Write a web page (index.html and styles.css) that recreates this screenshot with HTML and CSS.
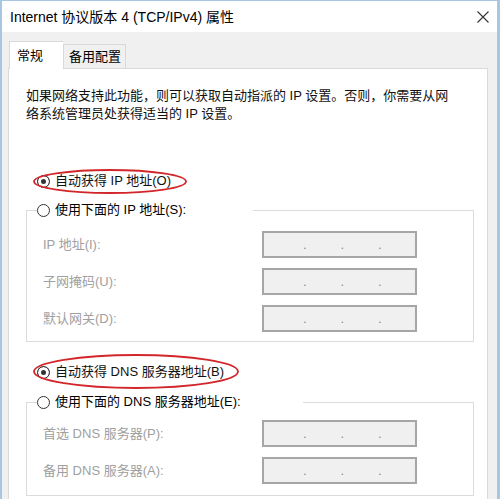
FILE: index.html
```html
<!DOCTYPE html>
<html lang="zh-CN">
<head>
    <meta charset="UTF-8">
    <meta name="viewport" content="width=device-width, initial-scale=1.0">
    <title>Internet 协议版本 4 (TCP/IPv4) 属性</title>
    <link rel="stylesheet" href="styles.css">
</head>
<body>
    <div class="window">
        <!-- Заголовок окна -->
        <div class="titlebar">
            <span class="title">Internet 协议版本 4 (TCP/IPv4) 属性</span>
            <svg class="close" width="12" height="12" viewBox="0 0 12 12">
                <path d="M0.5 0.5 L11.5 11.5 M11.5 0.5 L0.5 11.5" stroke="#333" stroke-width="1.1" fill="none"/>
            </svg>
        </div>

        <div class="content">
            <div class="tabs">
                <div class="tab active">常规</div>
                <div class="tab">备用配置</div>
            </div>

            <div class="panel">
                <p class="intro">如果网络支持此功能，则可以获取自动指派的 IP 设置。否则，你需要从网<br>络系统管理员处获得适当的 IP 设置。</p>

                <!-- IP -->
                <label class="radio-row first-row">
                    <input type="radio" name="ip" checked>
                    <span>自动获得 IP 地址(O)</span>
                    <svg class="mark mark-ip" viewBox="0 0 154 25" preserveAspectRatio="none">
                        <ellipse cx="77" cy="12.5" rx="76" ry="11.5" fill="none" stroke="#d2262b" stroke-width="1.8"/>
                    </svg>
                </label>

                <fieldset class="group group-ip">
                    <legend class="legend-ip">
                        <input type="radio" name="ip">
                        <span>使用下面的 IP 地址(S):</span>
                    </legend>
                    <div class="rows rows-ip">
                        <div class="row">
                            <span class="label">IP 地址(I):</span>
                            <div class="ip-field"><span>.</span><span>.</span><span>.</span></div>
                        </div>
                        <div class="row">
                            <span class="label">子网掩码(U):</span>
                            <div class="ip-field"><span>.</span><span>.</span><span>.</span></div>
                        </div>
                        <div class="row">
                            <span class="label">默认网关(D):</span>
                            <div class="ip-field"><span>.</span><span>.</span><span>.</span></div>
                        </div>
                    </div>
                </fieldset>

                <!-- DNS -->
                <label class="radio-row dns-row">
                    <input type="radio" name="dns" checked>
                    <span>自动获得 DNS 服务器地址(B)</span>
                    <svg class="mark mark-dns" viewBox="0 0 206 35" preserveAspectRatio="none">
                        <ellipse cx="103" cy="17.5" rx="102" ry="16.5" fill="none" stroke="#d2262b" stroke-width="1.8"/>
                    </svg>
                </label>

                <fieldset class="group group-dns">
                    <legend class="legend-dns">
                        <input type="radio" name="dns">
                        <span>使用下面的 DNS 服务器地址(E):</span>
                    </legend>
                    <div class="rows rows-dns">
                        <div class="row">
                            <span class="label">首选 DNS 服务器(P):</span>
                            <div class="ip-field"><span>.</span><span>.</span><span>.</span></div>
                        </div>
                        <div class="row">
                            <span class="label">备用 DNS 服务器(A):</span>
                            <div class="ip-field"><span>.</span><span>.</span><span>.</span></div>
                        </div>
                    </div>
                </fieldset>
            </div>
        </div>
    </div>
</body>
</html>
```

FILE: styles.css
```css
* {
    box-sizing: border-box;
    margin: 0;
    padding: 0;
}

html, body {
    width: 500px;
    height: 499px;
    overflow: hidden;
}

body {
    font-family: 'Liberation Sans', 'Noto Sans CJK SC', sans-serif;
    font-size: 13px;
    color: #111;
    background-color: #f0f0f0;
}

.window {
    width: 500px;
    height: 499px;
    border-top: 1px solid #a7c6e4;
    border-left: 2px solid #a7c6e4;
    border-right: 3px solid #a7c6e4;
    background-color: #f0f0f0;
    overflow: hidden;
}

.titlebar {
    height: 31px;
    background-color: #fff;
    display: flex;
    align-items: center;
    justify-content: space-between;
    padding: 0 8px 0 8px;
}

.title {
    font-size: 14px;
    line-height: 18px;
    color: #000;
}

.content {
    padding: 9px 9px 0 6px;
}

.tabs {
    display: flex;
    align-items: flex-end;
    height: 27px;
}

.tab {
    height: 24px;
    line-height: 23px;
    padding: 0 4px 0 5px;
    border: 1px solid #d9d9d9;
    border-bottom: none;
    background-color: #f0f0f0;
    color: #000;
}

.tab.active {
    height: 28px;
    line-height: 27px;
    margin-left: 1px;
    margin-bottom: -1px;
    width: 54px;
    padding-left: 7px;
    background-color: #fff;
    border-right: none;
    position: relative;
    z-index: 1;
}

.panel {
    background-color: #fff;
    border: 1px solid #d9d9d9;
    border-bottom: none;
    height: 431px;
    padding: 18px 13px 0 17px;
}

.intro {
    line-height: 18px;
    white-space: nowrap;
}

.radio-row {
    position: relative;
    display: flex;
    align-items: center;
    gap: 5px;
    height: 18px;
    line-height: 18px;
    padding-left: 11px;
}

.first-row {
    margin-top: 49px;
}

.dns-row {
    margin-top: 21px;
}

input[type="radio"] {
    appearance: none;
    width: 13px;
    height: 13px;
    margin: 0;
    border: 1px solid #333;
    border-radius: 50%;
    background-color: #fff;
    flex-shrink: 0;
}

input[type="radio"]:checked {
    background-color: #333;
    box-shadow: inset 0 0 0 3px #fff;
}

.mark {
    position: absolute;
    left: 7px;
    pointer-events: none;
}

.mark-ip {
    top: -3px;
    width: 154px;
    height: 25px;
}

.mark-dns {
    top: -9px;
    width: 206px;
    height: 35px;
}

.group {
    border: 1px solid #dcdcdc;
    padding: 0;
}

.group-ip {
    margin-top: 11px;
}

.group-dns {
    margin-top: 12px;
}

legend {
    display: flex;
    align-items: center;
    gap: 5px;
    height: 18px;
    line-height: 18px;
    margin-left: 10px;
    padding: 0;
    color: #000;
}

.legend-ip {
    width: 216px;
}

.legend-dns {
    width: 266px;
}

.rows {
    display: flex;
    flex-direction: column;
    gap: 10px;
    padding-left: 16px;
}

.rows-ip {
    padding-top: 12px;
    padding-bottom: 9px;
}

.rows-dns {
    padding-top: 9px;
    padding-bottom: 11px;
}

.row {
    display: flex;
    align-items: center;
}

.label {
    width: 219px;
    color: #a0a0a0;
    line-height: 18px;
}

.ip-field {
    width: 155px;
    height: 27px;
    border: 2px solid #a6a6a6;
    background-color: #f0f0f0;
    display: flex;
    align-items: center;
    gap: 34px;
    padding: 0 0 0 39px;
    color: #888;
    line-height: 18px;
}

.ip-field span {
    width: 3.5px;
}
```
